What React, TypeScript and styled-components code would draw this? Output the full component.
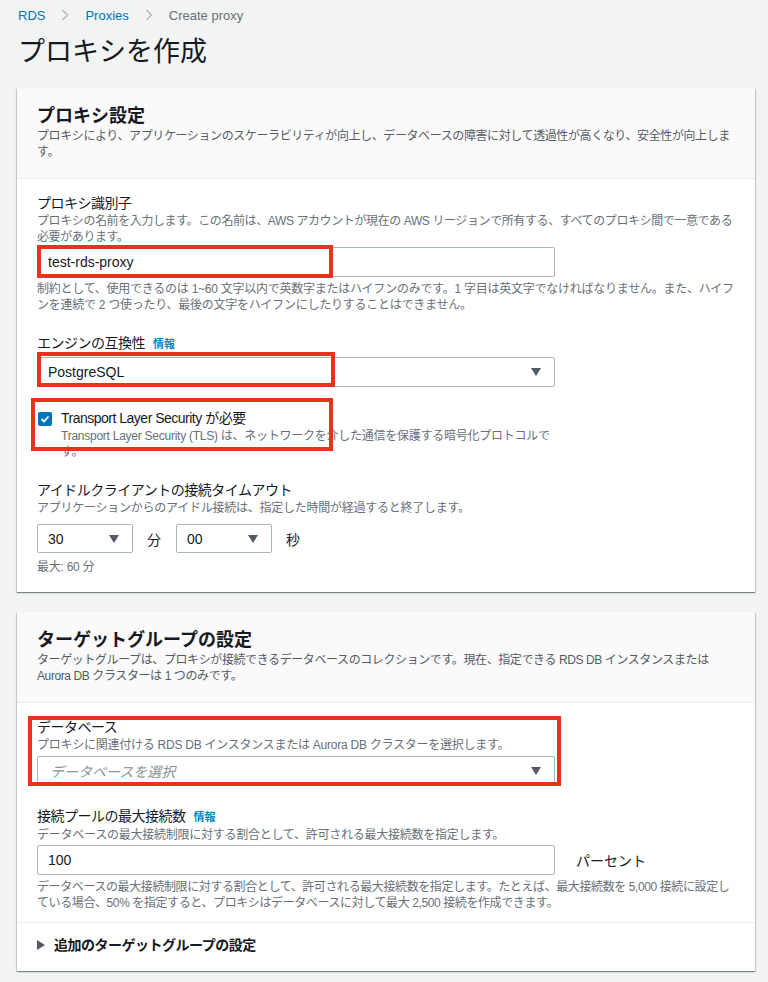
import React from 'react';
import styled, { createGlobalStyle } from 'styled-components';

const GlobalStyle = createGlobalStyle`
  body {
    margin: 0;
    background: #f2f3f3;
    font-family: "Liberation Sans", "Noto Sans CJK JP", sans-serif;
    color: #16191f;
  }
  * { box-sizing: border-box; }
`;

const Caret: React.FC<{ dir?: 'down' | 'right' }> = ({ dir = 'down' }) =>
  dir === 'down' ? (
    <svg width="10" height="8" viewBox="0 0 10 8">
      <polygon points="0,0 10,0 5,8" fill="#545b64" />
    </svg>
  ) : (
    <svg width="8" height="10" viewBox="0 0 8 10">
      <polygon points="0,0 8,5 0,10" fill="#545b64" />
    </svg>
  );

const Chevron = () => (
  <svg width="8" height="12" viewBox="0 0 8 12">
    <polyline points="1.5,1 6.5,6 1.5,11" fill="none" stroke="#aab7b8" strokeWidth="1.3" />
  </svg>
);

const App: React.FC = () => (
  <>
    <GlobalStyle />
    <Page>
      <Breadcrumbs>
        <Crumb $link>RDS</Crumb>
        <Chevron />
        <Crumb $link>Proxies</Crumb>
        <Chevron />
        <Crumb>Create proxy</Crumb>
      </Breadcrumbs>
      <PageTitle>プロキシを作成</PageTitle>

      <Panel>
        <PanelHeader>
          <PanelTitle>プロキシ設定</PanelTitle>
          <PanelDesc>
            プロキシにより、アプリケーションのスケーラビリティが向上し、データベースの障害に対して透過性が高くなり、安全性が向上します。
          </PanelDesc>
        </PanelHeader>
        <PanelBody $bottom={17}>
          <Field>
            <Label>プロキシ識別子</Label>
            <Desc $tight>
              プロキシの名前を入力します。この名前は、AWS アカウントが現在の AWS リージョンで所有する、すべてのプロキシ間で一意である必要があります。
            </Desc>
            <Marked $mt={2}>
              <TextInput defaultValue="test-rds-proxy" />
              <Highlight $top={-2} $left={0} $width={296} $height={33} />
            </Marked>
            <Hint>
              制約として、使用できるのは 1~60 文字以内で英数字またはハイフンのみです。1 字目は英文字でなければなりません。また、ハイフンを連続で 2 つ使ったり、最後の文字をハイフンにしたりすることはできません。
            </Hint>
          </Field>

          <Field>
            <Label>
              エンジンの互換性 <InfoLink>情報</InfoLink>
            </Label>
            <Marked $mt={3}>
              <SelectBox>
                <span>PostgreSQL</span>
                <Caret />
              </SelectBox>
              <Highlight $top={-5} $left={0} $width={298} $height={35} />
            </Marked>
          </Field>

          <CheckField>
            <CheckBox>
              <svg width="10" height="10" viewBox="0 0 10 10">
                <polyline points="1.5,5 4,7.5 8.5,2.5" fill="none" stroke="#fff" strokeWidth="1.8" />
              </svg>
            </CheckBox>
            <div>
              <Label>Transport Layer Security が必要</Label>
              <CheckDesc>
                Transport Layer Security (TLS) は、ネットワークを介した通信を保護する暗号化プロトコルです。
              </CheckDesc>
            </div>
            <Highlight $top={-10} $left={-6} $width={302} $height={53} />
          </CheckField>

          <Field>
            <Label>アイドルクライアントの接続タイムアウト</Label>
            <Desc>アプリケーションからのアイドル接続は、指定した時間が経過すると終了します。</Desc>
            <TimeRow>
              <SelectBox $width={96}>
                <span>30</span>
                <Caret />
              </SelectBox>
              <Unit>分</Unit>
              <SelectBox $width={96}>
                <span>00</span>
                <Caret />
              </SelectBox>
              <Unit>秒</Unit>
            </TimeRow>
            <Hint $mt={6}>最大: 60 分</Hint>
          </Field>
        </PanelBody>
      </Panel>

      <Panel>
        <PanelHeader>
          <PanelTitle>ターゲットグループの設定</PanelTitle>
          <PanelDesc>
            ターゲットグループは、プロキシが接続できるデータベースのコレクションです。現在、指定できる RDS DB インスタンスまたは Aurora DB クラスターは 1 つのみです。
          </PanelDesc>
        </PanelHeader>
        <PanelBody $bottom={11}>
          <MarkedField>
            <Label>データベース</Label>
            <Desc>プロキシに関連付ける RDS DB インスタンスまたは Aurora DB クラスターを選択します。</Desc>
            <SelectBox $mt={3} $placeholder>
              <span>データベースを選択</span>
              <Caret />
            </SelectBox>
            <Highlight $top={-1} $left={-9} $width={533} $height={70} />
          </MarkedField>

          <Field>
            <Label>
              接続プールの最大接続数 <InfoLink>情報</InfoLink>
            </Label>
            <Desc>データベースの最大接続制限に対する割合として、許可される最大接続数を指定します。</Desc>
            <InputRow>
              <TextInput defaultValue="100" />
              <Unit $left={21}>パーセント</Unit>
            </InputRow>
            <Hint $tight>
              データベースの最大接続制限に対する割合として、許可される最大接続数を指定します。たとえば、最大接続数を 5,000 接続に設定している場合、50% を指定すると、プロキシはデータベースに対して最大 2,500 接続を作成できます。
            </Hint>
          </Field>
        </PanelBody>
        <Expander>
          <Caret dir="right" />
          追加のターゲットグループの設定
        </Expander>
      </Panel>
    </Page>
  </>
);

const Page = styled.div`
  padding: 0 13px 20px 17px;
`;

const Breadcrumbs = styled.nav`
  display: flex;
  align-items: center;
  gap: 16px;
  height: 30px;
  padding-left: 1px;
  font-size: 13px;
`;

const Crumb = styled.span<{ $link?: boolean }>`
  color: ${p => (p.$link ? '#0073bb' : '#687078')};
`;

const PageTitle = styled.h1`
  margin: 4px 0 18px 1px;
  font-size: 27px;
  font-weight: 400;
  line-height: 36px;
  color: #16191f;
`;

const Panel = styled.section`
  background: #fff;
  margin-bottom: 20px;
  box-shadow: 0 1px 1px 0 rgba(0, 28, 36, 0.3), 1px 1px 1px 0 rgba(0, 28, 36, 0.15),
    -1px 1px 1px 0 rgba(0, 28, 36, 0.15);
`;

const PanelHeader = styled.div`
  background: #fafafa;
  border-bottom: 1px solid #eaeded;
  padding: 16px 20px 18px;
`;

const PanelTitle = styled.h2`
  margin: 0;
  font-size: 18px;
  font-weight: 700;
  line-height: 24px;
`;

const PanelDesc = styled.p`
  margin: 0;
  font-size: 12px;
  line-height: 16px;
  letter-spacing: -0.4px;
  color: #545b64;
`;

const PanelBody = styled.div<{ $bottom: number }>`
  display: flex;
  flex-direction: column;
  gap: 20px;
  padding: 14px 20px ${p => p.$bottom}px;
`;

const Field = styled.div`
  display: flex;
  flex-direction: column;
`;

const MarkedField = styled(Field)`
  position: relative;
`;

const Label = styled.div`
  display: flex;
  align-items: baseline;
  gap: 8px;
  font-size: 14px;
  line-height: 20px;
  letter-spacing: -0.5px;
  color: #16191f;
`;

const InfoLink = styled.span`
  font-size: 11px;
  font-weight: 700;
  letter-spacing: 0;
  color: #0a84c6;
`;

const Desc = styled.div<{ $tight?: boolean }>`
  font-size: 12px;
  line-height: 16px;
  letter-spacing: ${p => (p.$tight ? -0.4 : -0.25)}px;
  color: #687078;
`;

const Hint = styled(Desc)<{ $mt?: number }>`
  margin-top: ${p => p.$mt ?? 4}px;
`;

const Marked = styled.div<{ $mt: number }>`
  position: relative;
  width: 518px;
  margin-top: ${p => p.$mt}px;
`;

const Highlight = styled.div<{ $top: number; $left: number; $width: number; $height: number }>`
  position: absolute;
  top: ${p => p.$top}px;
  left: ${p => p.$left}px;
  width: ${p => p.$width}px;
  height: ${p => p.$height}px;
  border: 4px solid #e8331c;
  pointer-events: none;
`;

const TextInput = styled.input`
  width: 518px;
  height: 30px;
  padding: 0 10px;
  border: 1px solid #aab7b8;
  border-radius: 2px;
  font-family: inherit;
  font-size: 14px;
  color: #16191f;
  background: #fff;
  outline: none;
`;

const SelectBox = styled.div<{ $width?: number; $mt?: number; $placeholder?: boolean }>`
  display: flex;
  align-items: center;
  justify-content: space-between;
  width: ${p => p.$width ?? 518}px;
  height: ${p => (p.$width ? 29 : 30)}px;
  margin-top: ${p => p.$mt ?? 0}px;
  padding: 0 13px 0 ${p => (p.$placeholder ? 12 : 10)}px;
  border: 1px solid #aab7b8;
  border-radius: 2px;
  background: #fff;
  font-size: 14px;
  color: ${p => (p.$placeholder ? '#879596' : '#16191f')};
  font-style: ${p => (p.$placeholder ? 'italic' : 'normal')};
`;

const CheckField = styled.div`
  position: relative;
  display: flex;
  align-items: flex-start;
  gap: 9px;
  margin-top: 1px;
  padding-left: 1px;
`;

const CheckBox = styled.span`
  display: flex;
  align-items: center;
  justify-content: center;
  flex: none;
  width: 14px;
  height: 14px;
  margin-top: 4px;
  border-radius: 2px;
  background: #0073bb;
`;

const CheckDesc = styled(Desc)`
  max-width: 492px;
`;

const TimeRow = styled.div`
  display: flex;
  align-items: center;
  margin-top: 8px;
`;

const InputRow = styled.div`
  display: flex;
  align-items: center;
  margin-top: 2px;
`;

const Unit = styled.span<{ $left?: number }>`
  font-size: 14px;
  color: #16191f;
  margin: 0 15px 0 ${p => p.$left ?? 14}px;
`;

const Expander = styled.div`
  display: flex;
  align-items: center;
  gap: 9px;
  border-top: 1px solid #eaeded;
  padding: 12px 20px 16px;
  font-size: 14px;
  line-height: 20px;
  font-weight: 700;
  letter-spacing: -0.5px;
`;

export default App;
